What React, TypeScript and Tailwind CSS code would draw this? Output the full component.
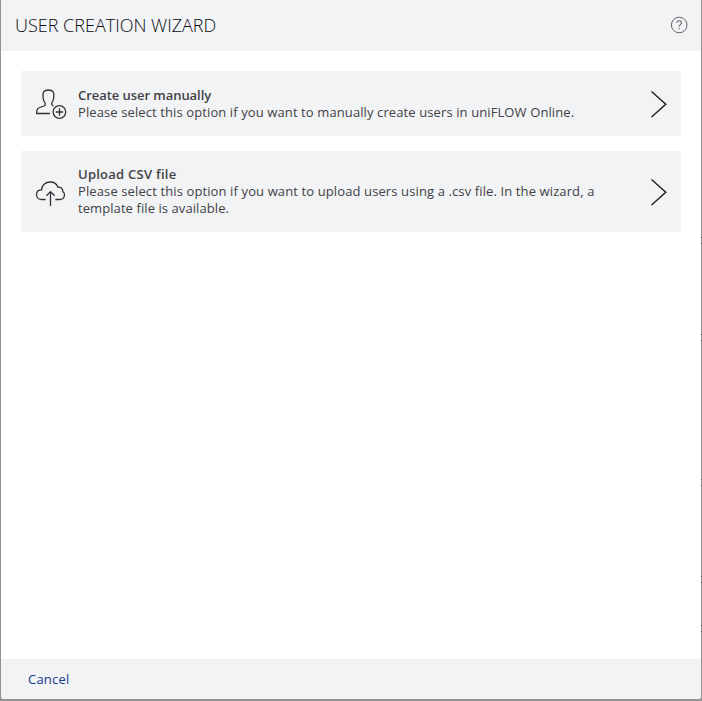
import React from "react";

function HelpIcon() {
  return (
    <svg width="18" height="18" viewBox="0 0 18 18" fill="none" stroke="#66666a" strokeWidth="1">
      <circle cx="9.2" cy="9" r="7.8" />
      <path d="M6.9 6.8C6.9 5.4 7.8 4.8 9.1 4.8S11.4 5.6 11.4 6.9C11.4 8.6 9.1 8.7 9.1 10.7M9.1 12V13.2" strokeWidth="1.1" />
    </svg>
  );
}

function AddUserIcon() {
  return (
    <svg width="32" height="32" viewBox="0 0 32 32" fill="none" stroke="#333336" strokeWidth="1.3">
      <path d="M15 25.5H1.6C1.6 22.5 1.9 20.9 3.6 20L9.5 17.8C10.8 16.8 10.5 15.5 9.5 14.2C8.5 12.8 8.3 11.3 8.1 9.5C7.4 4.7 8.4 2 13.4 2C18.4 2 19.4 4.7 18.7 9.5C18.5 11.3 18.3 12.8 17.3 14.2C16.3 15.5 16.3 17 18.4 17.9" />
      <circle cx="24.4" cy="24" r="6.3" />
      <path d="M24.5 20.3V27.7M20.8 24H28.2" />
    </svg>
  );
}

function CloudUploadIcon() {
  return (
    <svg width="32" height="28" viewBox="0 0 32 28" fill="none" stroke="#333336" strokeWidth="1.3">
      <path d="M10.6 19.5H6.6C3.6 19.5 1.5 17.4 1.5 14.7C1.5 11.8 3.6 9.9 6.6 9.9C6.6 5.2 10.5 2 15.1 2C19 2 22 4.2 22.9 7.2C26 7 28 8.6 27.8 11.5C29 12.4 29.6 13.5 29.5 15C29.3 17.7 27.5 19.5 24.6 19.5H20.4" />
      <path d="M15.5 26V11.6M11.4 15.7L15.5 11.6L19.6 15.7" />
    </svg>
  );
}

function Chevron() {
  return (
    <svg width="18" height="28" viewBox="0 0 18 28" fill="none" stroke="#1c1c1e" strokeWidth="1.4">
      <path d="M1.5 1.5L15.8 14.2L1.5 27" />
    </svg>
  );
}

export default function App() {
  return (
    <div className="relative h-[701px] w-[702px] bg-[#929292] px-px pb-0.5 font-['Open_Sans','Noto_Sans',sans-serif] text-[13px] leading-[17px] text-[#424246]">
      <div className="flex h-full flex-col overflow-hidden rounded-b-[3px] bg-white">
        <header className="flex h-[51px] shrink-0 items-center justify-between bg-[#f1f3f5] pr-[13px] pb-px pl-[14px]">
          <h1 className="text-[18px] leading-6 font-light whitespace-nowrap text-[#0c0c10]">USER CREATION WIZARD</h1>
          <HelpIcon />
        </header>
        <main className="flex flex-1 flex-col gap-[15px] px-5 pt-5">
          <button className="flex h-[65px] w-[660px] bg-[#f1f3f5] pl-3.5 text-left">
            <span className="mt-[17px] w-[43px]"><AddUserIcon /></span>
            <span className="mt-4 flex flex-1 flex-col whitespace-nowrap">
              <span className="font-semibold tracking-[-0.05px]">Create user manually</span>
              <span className="tracking-[0.105px]">Please select this option if you want to manually create users in uniFLOW Online.</span>
            </span>
            <span className="mt-[19px] mr-[13px]"><Chevron /></span>
          </button>
          <button className="flex h-[81px] w-[660px] bg-[#f1f3f5] pl-3.5 text-left">
            <span className="mt-[29px] w-[43px]"><CloudUploadIcon /></span>
            <span className="mt-[15px] flex flex-1 flex-col whitespace-nowrap">
              <span className="font-semibold tracking-[0.25px]">Upload CSV file</span>
              <span className="tracking-[0.115px]">Please select this option if you want to upload users using a .csv file. In the wizard, a</span>
              <span className="tracking-[0.08px]">template file is available.</span>
            </span>
            <span className="mt-[27px] mr-[13px]"><Chevron /></span>
          </button>
        </main>
        <footer className="flex h-10 shrink-0 items-center bg-[#f1f3f5] pl-[27px]">
          <button className="tracking-[0.2px] text-[#173a8c]">Cancel</button>
        </footer>
      </div>
      <div className="absolute top-[237px] right-0 h-[7px] w-px border-y border-[#444]" />
      <div className="absolute top-[334px] right-0 h-[7px] w-px border-y border-[#444]" />
      <div className="absolute top-[479px] right-0 h-[7px] w-px border-y border-[#666]" />
      <div className="absolute top-[576px] right-0 h-[7px] w-px border-y border-[#444]" />
      <div className="absolute top-[625px] right-0 h-[7px] w-px border-y border-[#444]" />
    </div>
  );
}
